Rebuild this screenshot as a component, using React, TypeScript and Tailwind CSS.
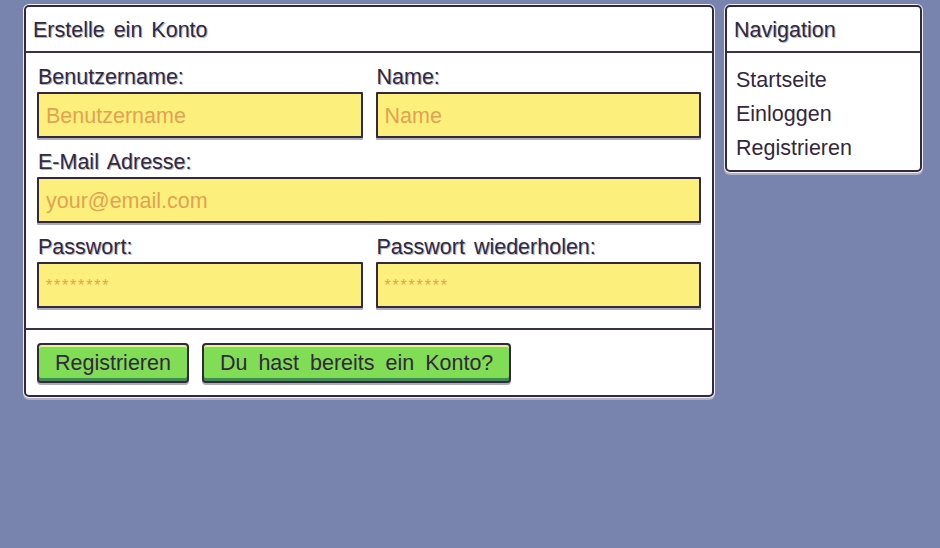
import React from "react";

const font = { fontFamily: '"Liberation Sans", Arial, sans-serif' };
const ts = "[text-shadow:1px_1px_0_#b4b7c6]";

function Field({ label, placeholder, small }: { label: string; placeholder: string; small?: boolean }) {
  return (
    <div className="flex flex-col">
      <div className={`h-6 leading-6 text-[21.5px] text-[#33283d] pl-[1px] ${ts}`}>{label}</div>
      <div
        className="mt-[3px] h-[46px] border-2 border-[#33283d] bg-[#fdef7c] rounded-[1px] flex items-center px-[7px] pt-[2px] shadow-[0_2px_0_#a8acbc]"
      >
        <span className={small ? "text-[16px] text-[#e2a250] tracking-[1.8px]" : "text-[21.5px] text-[#e2a250]"}>{placeholder}</span>
      </div>
    </div>
  );
}

function Button({ children }: { children: React.ReactNode }) {
  return (
    <div className="h-10 px-[16px] flex items-center border-2 border-[#33283d] rounded-[4px] bg-[#80dd55] shadow-[inset_0_2px_0_#e2f58e,inset_0_-3px_0_#3f8d4f,0_2px_0_#a8acbc] text-[21.5px] text-[#33283d] pt-[1px] [word-spacing:5px]">
      {children}
    </div>
  );
}

export default function App() {
  return (
    <div
      className="w-[940px] h-[548px] bg-[#7884ad] pl-6 pt-[5px] flex items-start gap-[11px] [word-spacing:3px]"
      style={font}
    >
      <div className="w-[690px] bg-white border-2 border-[#33283d] rounded-[5px] shadow-[0_0_0_1px_#eef0f6,0_2px_0_1px_#aeb2c2]">
        <div className={`h-[46px] border-b-2 border-[#3a3048] pl-[7px] pt-[3px] flex items-center text-[21.5px] text-[#33283d] ${ts}`}>
          Erstelle ein Konto
        </div>
        <div className="px-[11px] pt-3 pb-5 flex flex-col gap-3 border-b-2 border-[#3a3048]">
          <div className="grid grid-cols-2 gap-x-[13px]">
            <Field label="Benutzername:" placeholder="Benutzername" />
            <Field label="Name:" placeholder="Name" />
          </div>
          <Field label="E-Mail Adresse:" placeholder="your@email.com" />
          <div className="grid grid-cols-2 gap-x-[13px]">
            <Field label="Passwort:" placeholder="********" small />
            <Field label="Passwort wiederholen:" placeholder="********" small />
          </div>
        </div>
        <div className="px-[11px] pt-[13px] pb-3 flex gap-[13px]">
          <Button>Registrieren</Button>
          <Button>Du hast bereits ein Konto?</Button>
        </div>
      </div>
      <div className="w-[197px] bg-white border-2 border-[#33283d] rounded-[5px] shadow-[0_0_0_1px_#eef0f6,0_2px_0_1px_#aeb2c2]">
        <div className={`h-[46px] border-b-2 border-[#3a3048] pl-[7px] pt-[3px] flex items-center text-[21.5px] text-[#33283d] ${ts}`}>
          Navigation
        </div>
        <div className="pt-[10px] pb-[5px] pl-[9px] flex flex-col text-[21.5px] text-[#33283d]">
          <div className="h-[34px] leading-[34px]">Startseite</div>
          <div className="h-[34px] leading-[34px]">Einloggen</div>
          <div className="h-[34px] leading-[34px]">Registrieren</div>
        </div>
      </div>
    </div>
  );
}
